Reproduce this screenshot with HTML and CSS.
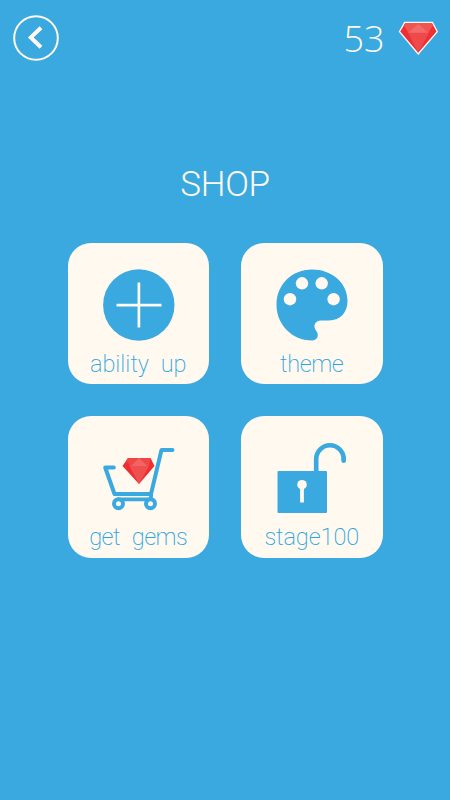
FILE: index.html
```html
<!DOCTYPE html>
<html lang="en">
<head>
<meta charset="utf-8">
<title>Shop</title>
<link rel="stylesheet" href="styles.css">
</head>
<body>
<header class="topbar">
  <button class="back" aria-label="Back">
    <svg width="46" height="46" viewBox="0 0 46 46"><circle cx="23" cy="23" r="21.8" fill="none" stroke="#fff9f0" stroke-width="2"/><path d="M28 12.700 17.800 22.400 28 32.200" fill="none" stroke="#fff9f0" stroke-width="4"/></svg>
  </button>
  <div class="balance">
    <span class="count">53</span>
    <svg class="gem" width="41" height="35" viewBox="0.600 1.200 38.700 33">
      <path d="M6.500 1.800H33.500L38.400 11.300 19.700 33.200 1.300 11.300Z" fill="#fff9f0"/>
      <path d="M7.500 3H32.500L37 11 19.700 31.200 2.700 11Z" fill="#ee3034"/>
      <path d="M7.500 3H32.500L30 12 19.700 31.200 10 12Z" fill="#ef4a4b"/>
      <path d="M7.500 3H32.500L33.800 5 29 12.300H10.500L6.200 5Z" fill="#f05554"/>
      <path d="M19.700 4 29 12.300H10.500Z" fill="#f36a67"/>
    </svg>
  </div>
</header>
<main class="shop">
  <h1 class="title">SHOP</h1>
  <div class="grid">
    <a class="card">
      <svg class="icon" viewBox="7.5 7.5 141.5 108"><circle cx="78.3" cy="69.5" r="35.7" fill="#39a9e0"/><path d="M56 69.7H101M78.4 47V92" stroke="#fff9f0" stroke-width="2.7"/></svg>
      <span class="label ability">ability up</span>
    </a>
    <a class="card">
      <svg class="icon" viewBox="9 7.5 141.5 108">
        <path d="M80 34C60 34 44.500 49 44.500 69.500C44.500 89 60 105 80 105C85.500 105 87.500 99.500 84.300 95.500C80.500 90.500 83 85 89 85H97C108.500 85 115.500 76.500 115.500 65.500C115.500 47.500 100 34 80 34Z" fill="#39a9e0"/>
        <g fill="#fff9f0"><circle cx="58" cy="63.700" r="6.200"/><circle cx="70" cy="47.800" r="6.200"/><circle cx="89.700" cy="47.800" r="6.200"/><circle cx="101.600" cy="63.700" r="6.200"/></g>
      </svg>
      <span class="label theme">theme</span>
    </a>
    <a class="card">
      <svg class="icon" viewBox="7.5 8 141.5 108">
        <path d="M67.500 50H90L94 58 78.500 76 62 58Z" fill="#ed2e33"/>
        <path d="M67.500 50H90L88 59 78.500 76 69.500 59Z" fill="#ef504f"/>
        <path d="M67.500 50H90L87 58H70.500L65.500 53Z" fill="#ef4746"/>
        <path d="M78.500 50 87 58H70.500Z" fill="#f26461"/>
        <g fill="none" stroke="#39a9e0" stroke-width="4" stroke-linecap="round" stroke-linejoin="round"><path d="M53.300 59.500H44.700L54 86H90.500L101 41.900H112"/><path d="M57.500 91.300H90.500V86" stroke-width="3.800"/></g>
        <g fill="#fff9f0" stroke="#39a9e0" stroke-width="4"><circle cx="58" cy="95.700" r="4.500"/><circle cx="90" cy="95.700" r="4.500"/></g>
      </svg>
      <span class="label gems">get gems</span>
    </a>
    <a class="card">
      <svg class="icon" viewBox="9 8 141.5 108">
        <rect x="45.500" y="63" width="49.500" height="42" rx="1" fill="#39a9e0"/>
        <path d="M84.200 65V51A13.700 13.700 0 0 1 111.700 51V52.500" fill="none" stroke="#39a9e0" stroke-width="4.600"/><path d="M111.700 51V52.800" stroke="#39a9e0" stroke-width="4.600" stroke-linecap="round"/>
        <circle cx="70" cy="76.700" r="4.800" fill="#fff9f0"/><path d="M70 77V94.500" stroke="#fff9f0" stroke-width="3.800" stroke-linecap="butt"/>
      </svg>
      <span class="label stage">stage100</span>
    </a>
  </div>
</main>
</body>
</html>
```
FILE: styles.css
```css
* { box-sizing: border-box; }
body {
  margin: 0;
  width: 450px;
  height: 800px;
  overflow: hidden;
  background: #39a9e0;
  color: #fff9f0;
  font-family: Roboto, "Open Sans", sans-serif;
  font-weight: 300;
}
.topbar {
  display: flex;
  justify-content: space-between;
  align-items: flex-start;
  height: 76px;
  padding: 14.500px 11.500px 0 12.500px;
}
.back { display: block; width: 46px; height: 46px; padding: 0; border: 0; background: none; }
.back svg { display: block; }
.balance { display: flex; align-items: flex-start; gap: 13px; padding-top: 6px; }
.count { font: 300 36px/36px "Open Sans", sans-serif; }
.gem { display: block; }
.shop { display: flex; flex-direction: column; align-items: center; }
.title {
  margin: 88px 0 0;
  height: 78.500px;
  font-size: 35px;
  line-height: 42px;
  font-weight: 300;
  letter-spacing: -0.300px;
}
.grid { display: grid; grid-template-columns: 141.500px 141.500px; gap: 32px; }
.card {
  display: flex;
  flex-direction: column;
  align-items: center;
  height: 141.500px;
  border-radius: 23px;
  background: #fff9f0;
  color: #2ba5df;
}
.icon { display: block; width: 141.500px; height: 108px; flex: none; }
.label { font-size: 23.500px; line-height: 26px; font-weight: 200; white-space: pre; }
.ability { letter-spacing: 0; word-spacing: 6px; }
.theme { letter-spacing: -0.400px; }
.gems { letter-spacing: -0.500px; word-spacing: 6.500px; }
.stage { letter-spacing: -0.100px; }
```
